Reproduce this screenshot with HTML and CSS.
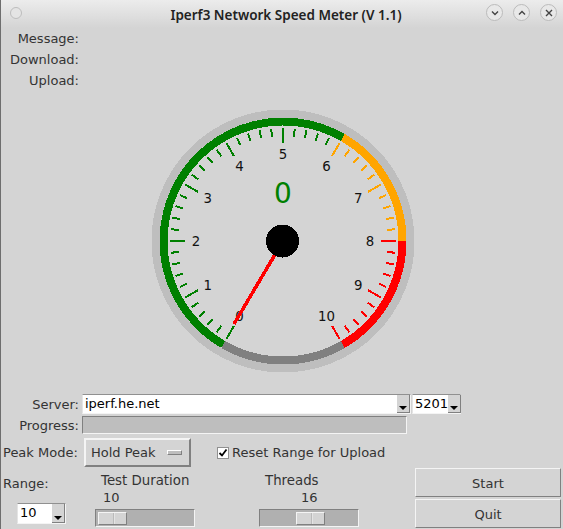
FILE: index.html
```html
<!DOCTYPE html>
<html lang="en">
<head>
  <meta charset="UTF-8" />
  <title>Iperf3 Network Speed Meter</title>
  <link rel="stylesheet" href="styles.css">
</head>
<body>

  <header class="titlebar">
    <div class="wm-left"><span class="wm-dot"></span></div>
    <h1>Iperf3 Network Speed Meter (V 1.1)</h1>
    <div class="wm-buttons">
      <span class="wm-btn"><svg viewBox="0 0 10 10"><path d="M2 3.5 5 6.5 8 3.5" /></svg></span>
      <span class="wm-btn"><svg viewBox="0 0 10 10"><path d="M2 6.5 5 3.5 8 6.5" /></svg></span>
      <span class="wm-btn"><svg viewBox="0 0 10 10"><path d="M2 2 8 8M8 2 2 8" /></svg></span>
    </div>
  </header>

  <section class="status">
    <div class="status-row">Message:</div>
    <div class="status-row">Download:</div>
    <div class="status-row">Upload:</div>
  </section>

  <div class="gauge-wrap">
    <svg class="gauge" width="563" height="302" viewBox="0 91 563 302">
      <circle class="ring" cx="283" cy="241" r="127.5" />
      <path class="band band-grey" d="M223.25 344.5A119.5 119.5 0 0 0 342.75 344.5" />
      <path class="band band-green" d="M223.25 344.5A119.5 119.5 0 0 1 342.75 137.5" />
      <path class="band band-orange" d="M342.75 137.5A119.5 119.5 0 0 1 402.5 241" />
      <path class="band band-red" d="M402.5 241A119.5 119.5 0 0 1 342.75 344.5" />

      <g class="ticks tick-green" id="ticks-green"></g>
      <g class="ticks tick-orange" id="ticks-orange"></g>
      <g class="ticks tick-red" id="ticks-red"></g>

      <g class="scale-nums">
        <text x="239.5" y="321">0</text>
        <text x="207.7" y="290">1</text>
        <text x="196" y="246">2</text>
        <text x="207.7" y="203">3</text>
        <text x="239.5" y="171">4</text>
        <text x="283" y="159">5</text>
        <text x="326.5" y="171">6</text>
        <text x="358.3" y="203">7</text>
        <text x="370" y="246">8</text>
        <text x="358.3" y="290">9</text>
        <text x="326.5" y="321">10</text>
      </g>

      <text class="readout" x="283" y="203">0</text>
      <line class="needle" x1="283" y1="241" x2="234" y2="324" />
      <circle class="hub" cx="282.5" cy="241" r="16.5" />
    </svg>
  </div>

  <section class="controls">
    <div class="row row-server">
      <label class="row-label">Server:</label>
      <div class="combo combo-server">
        <span class="combo-text">iperf.he.net</span>
        <span class="combo-arrow"></span>
      </div>
      <div class="combo combo-port">
        <span class="combo-text">5201</span>
        <span class="combo-arrow"></span>
      </div>
    </div>

    <div class="row row-progress">
      <label class="row-label">Progress:</label>
      <div class="progress"></div>
    </div>

    <div class="row row-peak">
      <label class="peak-label">Peak Mode:</label>
      <div class="menu-btn">Hold Peak <span class="menu-ind"></span></div>
      <label class="check">
        <span class="check-box"><svg viewBox="0 0 10 10"><path d="M1.5 5 4 7.5 8.5 1.5" /></svg></span>
        Reset Range for Upload
      </label>
    </div>

    <div class="bottom">
      <div class="range-col">
        <div class="range-label">Range:</div>
        <div class="combo combo-range">
          <span class="combo-text">10</span>
          <span class="combo-arrow"></span>
        </div>
      </div>

      <div class="scale-col scale-duration">
        <div class="scale-title">Test Duration</div>
        <div class="scale-value">10</div>
        <div class="trough"><span class="slider"></span></div>
      </div>

      <div class="scale-col scale-threads">
        <div class="scale-title">Threads</div>
        <div class="scale-value">16</div>
        <div class="trough"><span class="slider"></span></div>
      </div>

      <div class="actions">
        <button class="action">Start</button>
        <button class="action">Quit</button>
      </div>
    </div>
  </section>

  <script>
    // one tick every 6 degrees, 0 sits at -150 and 10 at +150
    function addTicks(id, from, to) {
      const group = document.getElementById(id);
      for (let i = from; i < to; i++) {
        const major = i % 5 === 0;
        const tick = document.createElementNS("http://www.w3.org/2000/svg", "line");
        tick.setAttribute("x1", 283);
        tick.setAttribute("x2", 283);
        tick.setAttribute("y1", 241 - 113);
        tick.setAttribute("y2", 241 - (major ? 98 : 105));
        tick.setAttribute("transform", "rotate(" + (i * 6 - 150) + " 283 241)");
        group.appendChild(tick);
      }
    }
    addTicks("ticks-green", 0, 30);
    addTicks("ticks-orange", 30, 40);
    addTicks("ticks-red", 40, 51);
  </script>

</body>
</html>
```

FILE: styles.css
```css
* {
  box-sizing: border-box;
}

body {
  margin: 0;
  width: 563px;
  height: 529px;
  overflow: hidden;
  background-color: #d4d4d4;
  border-left: 1px solid #6e6e6e;
  font-family: "DejaVu Sans", sans-serif;
  font-size: 13px;
  color: #333;
}

.titlebar {
  height: 28px;
  display: grid;
  grid-template-columns: 1fr auto 1fr;
  align-items: center;
  padding: 0 6px 0 9px;
  background: linear-gradient(#ececec, #d4d4d4);
}

.titlebar h1 {
  margin: 0 0 0 5px;
  padding-top: 2px;
  text-align: center;
  font-family: "Noto Sans", sans-serif;
  font-size: 13.5px;
  font-weight: 600;
  color: #222;
}

.wm-left {
  display: flex;
}

.wm-dot {
  width: 12px;
  height: 12px;
  border-radius: 50%;
  border: 1px solid #bdbdbd;
  background-color: #e4e4e4;
  margin-top: -3px;
}

.wm-buttons {
  display: flex;
  justify-content: flex-end;
  gap: 10px;
  margin-top: -3px;
}

.wm-btn {
  width: 17px;
  height: 17px;
  border-radius: 50%;
  border: 1px solid #bbb;
  background-color: #e8e8e8;
  display: flex;
  align-items: center;
  justify-content: center;
}

.wm-btn svg {
  width: 10px;
  height: 10px;
  fill: none;
  stroke: #444;
  stroke-width: 1.4;
}

.status {
  height: 63px;
}

.status-row {
  width: 78px;
  height: 21px;
  line-height: 21px;
  text-align: right;
}

.gauge-wrap {
  height: 302px;
  margin-left: -1px;
}

.gauge {
  display: block;
}

.ring,
.band,
.ticks line,
.needle,
.hub {
  shape-rendering: crispEdges;
}

.ring {
  fill: none;
  stroke: #bebebe;
  stroke-width: 8;
}

.band {
  fill: none;
  stroke-width: 8;
}

.band-grey { stroke: #808080; }
.band-green { stroke: #008000; }
.band-orange { stroke: #ffa500; }
.band-red { stroke: #ff0000; }

.ticks line {
  stroke-width: 2;
}

.tick-green { stroke: #008000; }
.tick-orange { stroke: #ffa500; }
.tick-red { stroke: #ff0000; }

.scale-nums text {
  font-size: 13.33px;
  fill: #111;
  text-anchor: middle;
}

.readout {
  font-size: 28px;
  fill: #008000;
  text-anchor: middle;
}

.needle {
  stroke: #ff0000;
  stroke-width: 3.5;
}

.hub {
  fill: #000;
}

.row {
  display: flex;
}

.row-label {
  width: 78px;
  text-align: right;
  margin-right: 3px;
}

.row-server {
  height: 22px;
  align-items: center;
}

.combo {
  display: flex;
  height: 20px;
  background-color: #fff;
  border-top: 1px solid #909090;
  border-left: 1px solid #e4e4e4;
  border-bottom: 1px solid #f4f4f4;
  border-right: 1px solid #f4f4f4;
  color: #000;
}

.combo-text {
  flex: 1;
  padding-left: 2px;
  line-height: 18px;
}

.combo-arrow {
  position: relative;
  flex-shrink: 0;
  width: 13px;
  background-color: #d4d4d4;
  border-right: 1px solid #808080;
  border-bottom: 1px solid #808080;
}

.combo-arrow::after {
  content: "";
  position: absolute;
  left: 2px;
  bottom: 2px;
  border-left: 4px solid transparent;
  border-right: 4px solid transparent;
  border-top: 4px solid #000;
}

.combo-server {
  width: 329px;
}

.combo-port {
  width: 49px;
  margin-left: 1px;
}

.row-progress {
  height: 20px;
  align-items: center;
}

.progress {
  width: 325px;
  height: 18px;
  background-color: #bebebe;
  border-top: 1px solid #808080;
  border-left: 1px solid #808080;
  border-bottom: 1px solid #f4f4f4;
  border-right: 1px solid #f4f4f4;
}

.row-peak {
  height: 33px;
  padding-top: 2px;
  align-items: center;
}

.peak-label {
  width: 81px;
  margin-left: 2px;
  white-space: nowrap;
}

.menu-btn {
  width: 107px;
  height: 29px;
  padding-left: 5px;
  display: flex;
  align-items: center;
  gap: 11px;
  border: 2px solid;
  border-color: #f4f4f4 #808080 #808080 #f4f4f4;
}

.menu-ind {
  width: 15px;
  height: 5px;
  background-color: #bebebe;
  border: 1px solid;
  border-color: #fff #808080 #808080 #fff;
}

.check {
  display: flex;
  align-items: center;
  gap: 3px;
  margin-left: 26px;
}

.check-box {
  width: 12px;
  height: 12px;
  background-color: #fff;
  border: 1px solid #909090;
}

.check-box svg {
  display: block;
  width: 10px;
  height: 10px;
  fill: none;
  stroke: #000;
  stroke-width: 1.8;
}

.bottom {
  display: flex;
  height: 62px;
}

.range-col {
  width: 94px;
  padding-top: 8px;
}

.range-label {
  margin-left: 2px;
  height: 27px;
}

.combo-range {
  width: 49px;
  height: 21px;
  margin-left: 16px;
}

.scale-col {
  width: 100px;
  height: 100%;
  position: relative;
}

.scale-threads {
  margin-left: 64px;
}

.scale-title {
  height: 20px;
  line-height: 25px;
  padding-left: 6px;
  font-size: 13.33px;
}

.scale-value {
  height: 20px;
  line-height: 19px;
  padding-left: 8px;
}

.scale-threads .scale-value {
  padding-left: 42px;
}

.trough {
  height: 18px;
  margin-top: 1px;
  padding: 2px;
  display: flex;
  background-color: #b0b0b0;
  border: 1px solid;
  border-color: #808080 #f4f4f4 #f4f4f4 #808080;
}

.scale-threads .trough {
  padding-left: 36px;
}

.slider {
  width: 29px;
  height: 13px;
  background: linear-gradient(90deg, #d4d4d4 14px, #808080 14px, #f4f4f4 15px, #d4d4d4 16px);
  border: 1px solid;
  border-color: #f4f4f4 #808080 #808080 #f4f4f4;
}

.actions {
  display: flex;
  flex-direction: column;
  gap: 2px;
  margin-left: 56px;
}

.action {
  width: 146px;
  height: 29px;
  padding-top: 3px;
  font-family: "DejaVu Sans", sans-serif;
  font-size: 13px;
  color: #333;
  background-color: #d4d4d4;
  border: 1px solid;
  border-color: #f4f4f4 #808080 #808080 #f4f4f4;
}
```
